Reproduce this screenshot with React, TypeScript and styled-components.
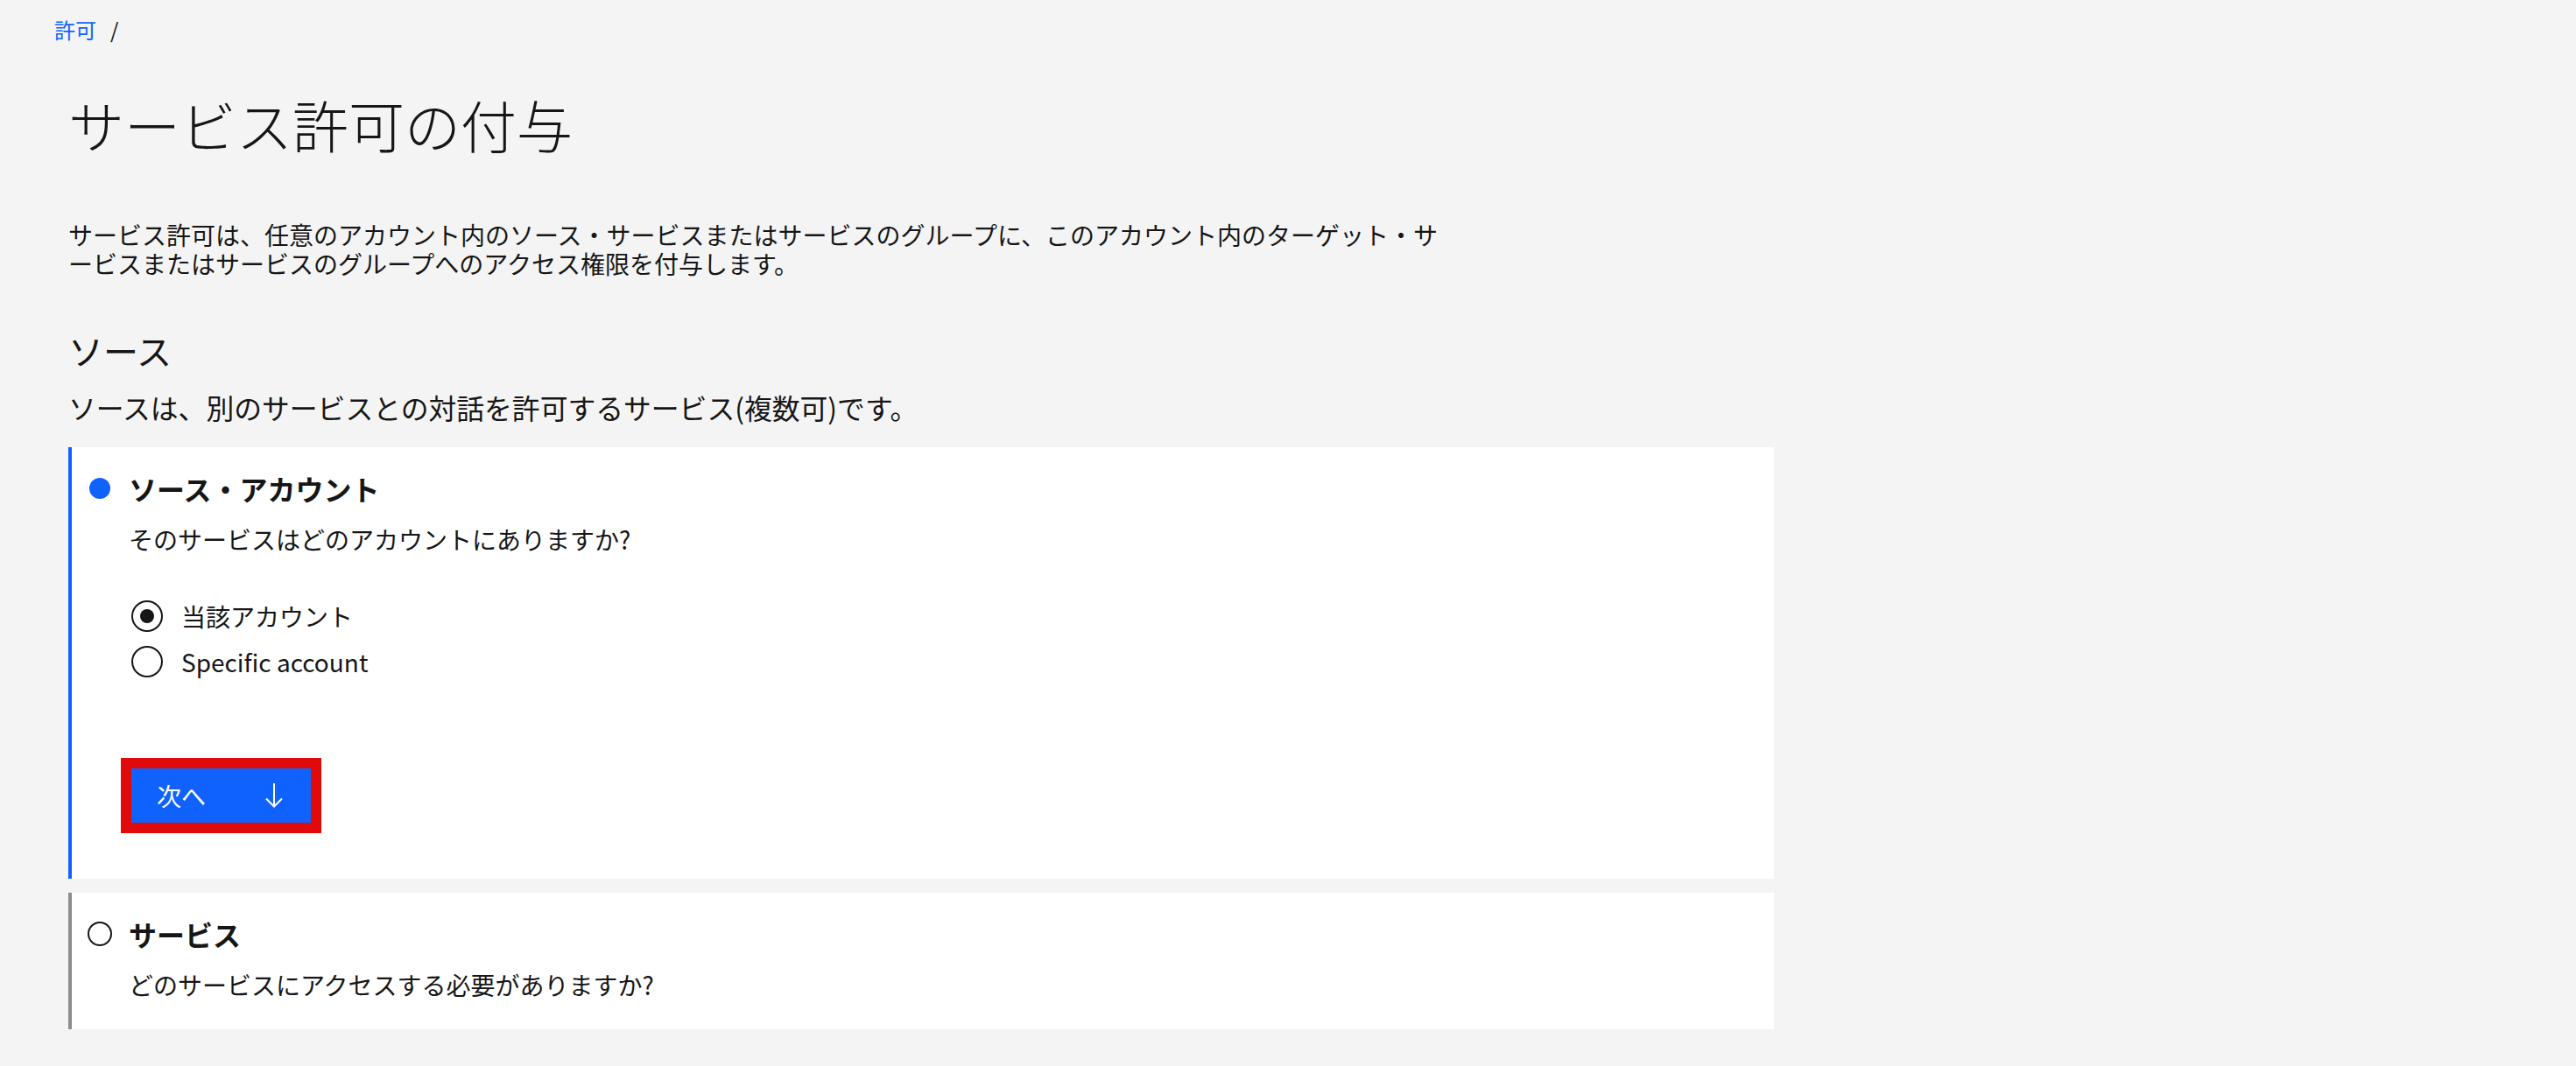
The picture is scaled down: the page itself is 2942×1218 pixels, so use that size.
import React from "react";
import styled, { createGlobalStyle } from "styled-components";

const GlobalStyle = createGlobalStyle`
  html, body {
    margin: 0;
    padding: 0;
    background: #f4f4f4;
  }
  body {
    font-family: "Noto Sans CJK JP", "Noto Sans", sans-serif;
    color: #161616;
  }
  *, *::before, *::after {
    box-sizing: border-box;
  }
`;

const Page = styled.div`
  min-height: 1218px;
  padding: 18px 0 0 62px;
  background: #f4f4f4;
`;

const Breadcrumb = styled.nav`
  display: flex;
  align-items: center;
  font-size: 24px;
  line-height: 32px;
`;

const CrumbLink = styled.a`
  color: #0f62fe;
  text-decoration: none;
`;

const CrumbSeparator = styled.span`
  margin-left: 16px;
  color: #161616;
`;

const Main = styled.main`
  padding-left: 16px;
`;

const Title = styled.h1`
  margin: 51px 0 0;
  font-size: 64px;
  line-height: 80px;
  font-weight: 300;
`;

const Intro = styled.p`
  margin: 71px 0 0;
  max-width: 1590px;
  font-size: 28px;
  line-height: 33px;
  line-break: anywhere;
`;

const SectionTitle = styled.h2`
  margin: 58px 0 0;
  font-size: 40px;
  line-height: 48px;
  font-weight: 400;
`;

const SectionDesc = styled.p`
  margin: 21px 0 0;
  font-size: 31.8px;
  line-height: 40px;
`;

const Steps = styled.div`
  margin-top: 26px;
  width: 1948px;
  display: flex;
  flex-direction: column;
  gap: 16px;
`;

const StepCard = styled.section<{ $active?: boolean; $padBottom: number }>`
  background: #ffffff;
  border-left: 4px solid ${(p) => (p.$active ? "#0f62fe" : "#8d8d8d")};
  padding: 27px 0 ${(p) => p.$padBottom}px 18px;
`;

const StepHeader = styled.div`
  display: flex;
  align-items: center;
  gap: 19px;
`;

const IconSlot = styled.span`
  width: 28px;
  height: 40px;
  display: flex;
  align-items: center;
  justify-content: center;
`;

const CurrentDot = styled.span`
  width: 24px;
  height: 24px;
  border-radius: 50%;
  background: #0f62fe;
`;

const PendingRing = styled.span`
  width: 28px;
  height: 28px;
  border-radius: 50%;
  border: 2px solid #161616;
`;

const StepTitle = styled.h3`
  margin: 0;
  font-size: 32px;
  line-height: 40px;
  font-weight: 700;
`;

const StepBody = styled.div`
  padding-left: 47px;
`;

const StepQuestion = styled.p`
  margin: 20px 0 0;
  font-size: 28px;
  line-height: 36px;
`;

const RadioGroup = styled.div`
  margin: 52px 0 0 3px;
  display: flex;
  flex-direction: column;
  gap: 16px;
`;

const RadioRow = styled.label`
  display: flex;
  align-items: center;
  gap: 21px;
  height: 36px;
  font-size: 28px;
  line-height: 36px;
`;

const RadioCircle = styled.span<{ $checked?: boolean }>`
  width: 36px;
  height: 36px;
  border-radius: 50%;
  border: 2px solid #161616;
  display: flex;
  align-items: center;
  justify-content: center;
  &::after {
    content: "";
    width: 16px;
    height: 16px;
    border-radius: 50%;
    background: ${(p) => (p.$checked ? "#161616" : "transparent")};
  }
`;

const ButtonArea = styled.div`
  margin: 92px 0 0 -9px;
`;

const HighlightFrame = styled.span`
  display: inline-flex;
  border: 12px solid #e00a0a;
`;

const PrimaryButton = styled.button`
  width: 205px;
  height: 62px;
  padding: 0 32px 0 29px;
  border: none;
  background: #0f62fe;
  color: #ffffff;
  font-family: inherit;
  font-size: 28px;
  line-height: 36px;
  display: flex;
  align-items: center;
  justify-content: space-between;
  cursor: pointer;
`;

const ArrowDown = () => (
  <svg width="20" height="28" viewBox="0 0 20 28" fill="none" stroke="#ffffff" strokeWidth="2">
    <path d="M10 0 V26.5" />
    <path d="M1 17.5 L10 26.5 L19 17.5" />
  </svg>
);

export default function App() {
  return (
    <>
      <GlobalStyle />
      <Page>
        <Breadcrumb>
          <CrumbLink href="#">許可</CrumbLink>
          <CrumbSeparator>/</CrumbSeparator>
        </Breadcrumb>
        <Main>
          <Title>サービス許可の付与</Title>
          <Intro>
            サービス許可は、任意のアカウント内のソース・サービスまたはサービスのグループに、このアカウント内のターゲット・サービスまたはサービスのグループへのアクセス権限を付与します。
          </Intro>
          <SectionTitle>ソース</SectionTitle>
          <SectionDesc>ソースは、別のサービスとの対話を許可するサービス(複数可)です。</SectionDesc>
          <Steps>
            <StepCard $active $padBottom={52}>
              <StepHeader>
                <IconSlot>
                  <CurrentDot />
                </IconSlot>
                <StepTitle>ソース・アカウント</StepTitle>
              </StepHeader>
              <StepBody>
                <StepQuestion>そのサービスはどのアカウントにありますか?</StepQuestion>
                <RadioGroup>
                  <RadioRow>
                    <RadioCircle $checked />
                    当該アカウント
                  </RadioRow>
                  <RadioRow>
                    <RadioCircle />
                    Specific account
                  </RadioRow>
                </RadioGroup>
                <ButtonArea>
                  <HighlightFrame>
                    <PrimaryButton>
                      <span>次へ</span>
                      <ArrowDown />
                    </PrimaryButton>
                  </HighlightFrame>
                </ButtonArea>
              </StepBody>
            </StepCard>
            <StepCard $padBottom={33}>
              <StepHeader>
                <IconSlot>
                  <PendingRing />
                </IconSlot>
                <StepTitle>サービス</StepTitle>
              </StepHeader>
              <StepBody>
                <StepQuestion>どのサービスにアクセスする必要がありますか?</StepQuestion>
              </StepBody>
            </StepCard>
          </Steps>
        </Main>
      </Page>
    </>
  );
}
